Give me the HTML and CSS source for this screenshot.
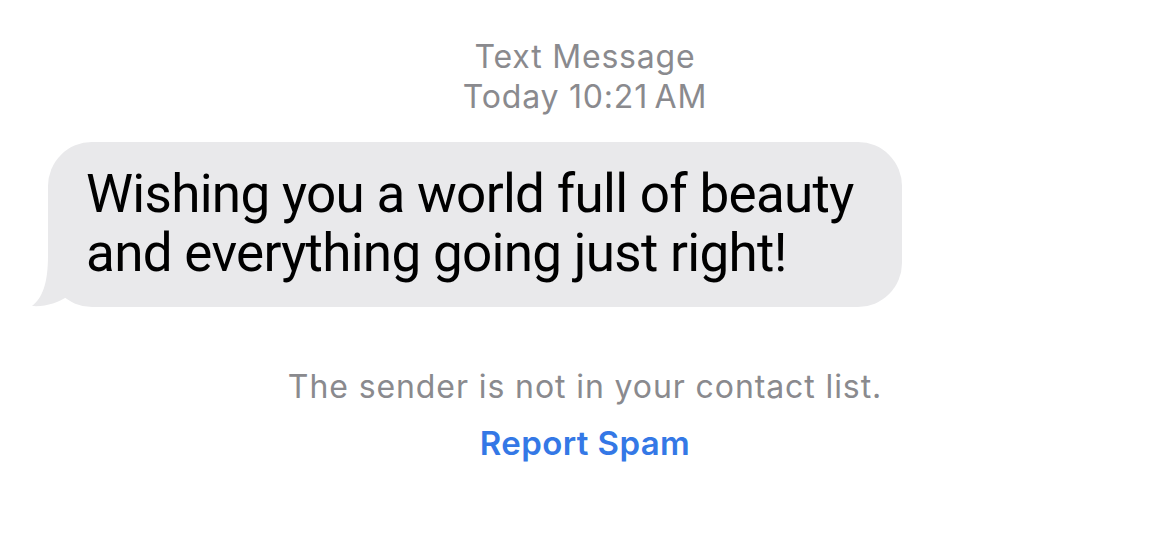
FILE: index.html
```html
<!DOCTYPE html>
<html>
<head>
<meta charset="utf-8">
<link rel="stylesheet" href="styles.css">
</head>
<body>
<div class="screen">
  <div class="meta">
    <div class="meta-line">Text Message</div>
    <div class="meta-line">Today 10:21&#8201;AM</div>
  </div>
  <div class="row">
    <div class="bubble">
      <p class="msg">Wishing you a world full of beauty<br>and everything going just right!</p>
      <svg class="tail" width="50" height="58" viewBox="0 0 50 58"><path d="M16 0 L16 5 C16 35 10 48 0 56 C13 57 26 53 36 46 L40 0 Z" fill="#e9e9eb"/></svg>
    </div>
  </div>
  <div class="notice">The sender is not in your contact list.</div>
  <div class="report">Report Spam</div>
</div>
</body>
</html>
```
FILE: styles.css
```css
html, body { margin: 0; padding: 0; background: #fff; }
.screen {
  width: 1170px;
  height: 539px;
  font-family: Inter, Roboto, "Noto Sans", sans-serif;
  display: flex;
  flex-direction: column;
  align-items: center;
  overflow: hidden;
}
.meta {
  margin-top: 37px;
  text-align: center;
  color: #8a8a8e;
  font-size: 32px;
  line-height: 40px;
  font-weight: 400;
  letter-spacing: 0.8px;
}
.row {
  align-self: stretch;
  padding-left: 48px;
  margin-top: 25px;
}
.bubble {
  position: relative;
  width: 854px;
  height: 165px;
  box-sizing: border-box;
  background: #e9e9eb;
  border-radius: 44px;
  padding: 23px 0 0 38px;
}
.msg {
  margin: 0;
  font-family: Roboto, "Noto Sans", sans-serif;
  font-size: 53px;
  line-height: 59px;
  color: #000;
  font-weight: 400;
  letter-spacing: -0.7px;
}
.tail {
  position: absolute;
  left: -16px;
  bottom: -1px;
}
.notice {
  margin-top: 60px;
  color: #8a8a8e;
  font-size: 32px;
  line-height: 40px;
  font-weight: 400;
  letter-spacing: 0.9px;
}
.report {
  margin-top: 16px;
  color: #3478e6;
  font-size: 33px;
  line-height: 40px;
  font-weight: 600;
  letter-spacing: 0.4px;
}
```
